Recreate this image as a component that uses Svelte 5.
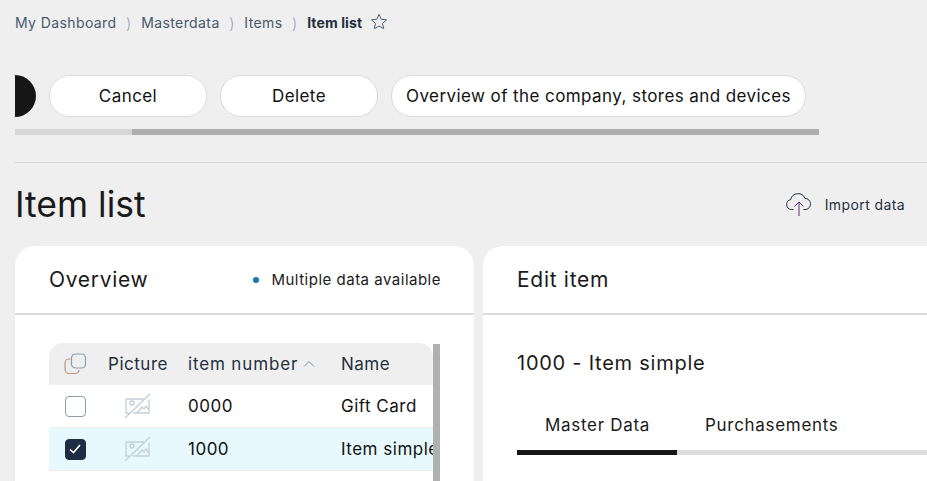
<script>
	const crumbs = ['My Dashboard', 'Masterdata', 'Items'];
	const actions = ['Cancel', 'Delete', 'Overview of the company, stores and devices'];
	const rows = [
		{ number: '0000', name: 'Gift Card', checked: false },
		{ number: '1000', name: 'Item simple', checked: true }
	];
</script>

<div class="page">
	<nav class="crumbs">
		{#each crumbs as crumb}
			<span class="crumb">{crumb}</span>
			<span class="sep">)</span>
		{/each}
		<span class="crumb crumb--current">Item list</span>
		<svg class="star" width="18" height="18" viewBox="0 0 18 18" fill="none" stroke="#4a6178" stroke-width="1">
			<path d="M9 1.300l2.200 5 5.400.5-4.100 3.600 1.200 5.300L9 13l-4.700 2.700 1.200-5.300L1.400 6.800l5.400-.5z" />
		</svg>
	</nav>

	<div class="actions-scroll">
		<div class="actions">
			<div class="dark-pill"></div>
			{#each actions as action, i}
				<button class="action" class:action--wide={i == 2}>{action}</button>
			{/each}
		</div>
		<div class="scrollbar"><div class="scrollbar__thumb"></div></div>
	</div>

	<div class="title-row">
		<h1>Item list</h1>
		<div class="import">
			<svg width="28" height="26" viewBox="0 0 28 26" fill="none" stroke="#24303f" stroke-width="1">
				<path d="M8.500 18.500H6.500a5 5 0 0 1-.8-9.900 7.500 7.500 0 0 1 14.300-1.200 5.600 5.600 0 0 1 1 11.100h-2.500" />
				<path d="M14 25V11.500M9.500 15.500l4.500-4.500 4.500 4.500" stroke="#5a2a8c" />
			</svg>
			<span>Import data</span>
		</div>
	</div>

	<div class="cards">
		<section class="card card--overview">
			<header class="card__head">
				<h2>Overview</h2>
				<div class="legend"><i></i>Multiple data available</div>
			</header>
			<div class="card__body">
				<div class="table-wrap">
					<div class="table">
						<div class="row row--head">
							<div class="cell cell--check">
								<svg width="24" height="24" viewBox="0 0 24 24" fill="none" stroke-width="1.200">
									<rect x="8.500" y="2" width="14" height="14" rx="4" stroke="#8c9bb0" />
									<path d="M7.500 7H6a4 4 0 0 0-4 4v6.500a4 4 0 0 0 4 4h6a4 4 0 0 0 4-3.500" stroke="#c98f7c" />
								</svg>
							</div>
							<div class="cell cell--pic">Picture</div>
							<div class="cell cell--num cell--sort">item number
								<svg width="12" height="8" viewBox="0 0 12 8" fill="none" stroke="#7d8b99"><path d="M1 6.500l5-5 5 5" /></svg>
							</div>
							<div class="cell cell--name">Name</div>
						</div>
						{#each rows as row}
							<div class="row" class:row--active={row.checked}>
								<div class="cell cell--check">
									<span class="box" class:box--on={row.checked}>
										{#if row.checked}
											<svg width="14" height="12" viewBox="0 0 14 12" fill="none" stroke="#fff" stroke-width="1.600"><path d="M2 6.500l3.500 3L12 2" /></svg>
										{/if}
									</span>
								</div>
								<div class="cell cell--pic">
									<svg class="nopic" width="28" height="26" viewBox="0 0 28 26" fill="none" stroke="#c3ced6" stroke-width="1.300">
										<path d="M2 6h18M25 6.500V20H9M2 6v14h3" />
										<circle cx="8" cy="10" r="2" />
										<path d="M13 20l5-6 2 2 2-3 3 4" />
										<path d="M1 25L26 1" />
									</svg>
								</div>
								<div class="cell cell--num">{row.number}</div>
								<div class="cell cell--name">{row.name}</div>
							</div>
						{/each}
					</div>
					<div class="table-bar"></div>
				</div>
			</div>
		</section>

		<section class="card card--edit">
			<header class="card__head">
				<h2>Edit item</h2>
			</header>
			<div class="edit__body">
				<h3>1000 - Item simple</h3>
				<div class="tabs">
					<div class="tab tab--active">Master Data</div>
					<div class="tab">Purchasements</div>
				</div>
			</div>
		</section>
	</div>
</div>

<style>
	:global(body) {
		margin: 0;
		background: #efefef;
	}

	.page {
		width: 927px;
		height: 481px;
		overflow: hidden;
		box-sizing: border-box;
		padding: 11px 0 0 15px;
		font-family: Inter, "Open Sans", sans-serif;
		color: #111;
	}

	.crumbs {
		display: flex;
		align-items: center;
		height: 22px;
		font-size: 14px;
		letter-spacing: 0.4px;
		color: #46596e;
	}

	.sep {
		margin: 3px 9.500px 0 9.500px;
		font-size: 15px;
		font-weight: 300;
		color: #9aa5b1;
	}

	.crumb--current {
		font-weight: 700;
		letter-spacing: 0.1px;
		color: #24303f;
	}

	.star {
		margin-left: 8px;
	}

	.actions-scroll {
		width: 804px;
		margin-top: 42px;
		overflow: hidden;
	}

	.actions {
		display: flex;
		gap: 13px;
		height: 42px;
	}

	.dark-pill {
		width: 21px;
		height: 42px;
		border-radius: 0 21px 21px 0;
		background: #161616;
	}

	.action {
		width: 158px;
		height: 42px;
		padding: 0;
		background: #fff;
		border: 1px solid #dcdcdc;
		border-radius: 21px;
		font: inherit;
		font-size: 17px;
		letter-spacing: 0.42px;
		color: #111;
	}

	.action--wide {
		width: 415px;
	}

	.scrollbar {
		height: 6px;
		margin-top: 12px;
		background: #d6d6d6;
	}

	.scrollbar__thumb {
		height: 6px;
		margin-left: 117px;
		background: #aeaeae;
	}

	.title-row {
		display: flex;
		justify-content: space-between;
		align-items: center;
		height: 83px;
		margin-top: 27px;
		border-top: 1px solid #d8d8d8;
		box-sizing: border-box;
	}

	h1 {
		margin: 0;
		font-size: 35.500px;
		font-weight: 400;
		color: #1a1a1a;
	}

	.import {
		display: flex;
		align-items: center;
		gap: 12px;
		padding-right: 22px;
		font-size: 14px;
		letter-spacing: 0.4px;
		color: #24303f;
	}

	.cards {
		display: flex;
		gap: 9px;
		margin-top: 1px;
	}

	.card {
		background: #fff;
		border-radius: 20px 20px 0 0;
		height: 240px;
	}

	.card--overview {
		width: 459px;
		flex-shrink: 0;
	}

	.card--edit {
		flex: 1;
		min-width: 0;
		border-radius: 20px 0 0 0;
	}

	.card__head {
		display: flex;
		justify-content: space-between;
		align-items: center;
		height: 67px;
		padding: 0 33px 0 34px;
		border-bottom: 2px solid #dcdcdc;
	}

	h2 {
		margin: 0;
		font-size: 21px;
		font-weight: 400;
		letter-spacing: 0.7px;
		color: #1a1a1a;
	}

	.legend {
		display: flex;
		align-items: center;
		font-size: 15px;
		letter-spacing: 0.5px;
		color: #1a1a1a;
	}

	.legend i {
		width: 6px;
		height: 6px;
		margin-right: 12px;
		border-radius: 50%;
		background: #0c7fa8;
	}

	.card__body {
		padding: 28px 0 0 34px;
	}

	.table-wrap {
		display: flex;
		width: 391px;
	}

	.table {
		width: 384px;
		overflow: hidden;
		border-radius: 14px 14px 0 0;
	}

	.table-bar {
		width: 7px;
		height: 140px;
		margin-top: 1px;
		background: #b0b0b0;
	}

	.row {
		display: flex;
		align-items: center;
		height: 43px;
		box-sizing: border-box;
		border-bottom: 1px solid #eeeeee;
		font-size: 17px;
		letter-spacing: 0.5px;
		color: #111;
		white-space: nowrap;
	}

	.row--head {
		height: 42px;
		border-bottom: 0;
		background: #efefef;
		color: #24303f;
	}

	.row--active {
		background: #e7f9fe;
	}

	.cell {
		display: flex;
		align-items: center;
	}

	.cell--check {
		justify-content: center;
		width: 52px;
		flex-shrink: 0;
	}

	.cell--pic {
		justify-content: center;
		width: 86px;
		margin-left: -6px;
		flex-shrink: 0;
	}

	.cell--num {
		gap: 5px;
		width: 160px;
		flex-shrink: 0;
		box-sizing: border-box;
		padding-left: 7px;
	}

	.cell--sort {
		letter-spacing: 0.85px;
	}

	.cell--name {
		flex: 1;
		min-width: 0;
	}

	.box {
		display: flex;
		justify-content: center;
		align-items: center;
		width: 19px;
		height: 19px;
		background: #fff;
		border: 1px solid #8c9bb0;
		border-radius: 4px;
	}

	.box--on {
		background: #1f2d42;
		border-color: #1f2d42;
	}

	.edit__body {
		padding: 0 0 0 34px;
	}

	h3 {
		margin: 0;
		padding-top: 35px;
		font-size: 20px;
		font-weight: 400;
		letter-spacing: 0.75px;
		line-height: 26px;
		color: #1a1a1a;
	}

	.tabs {
		display: flex;
		height: 60px;
		margin-top: 19px;
		box-sizing: border-box;
		border-bottom: 5px solid #dcdcdc;
	}

	.tab {
		height: 60px;
		box-sizing: border-box;
		padding: 18px 28px 0;
		border-bottom: 5px solid transparent;
		font-size: 17px;
		letter-spacing: 0.7px;
		line-height: 24px;
		white-space: nowrap;
		color: #1a1a1a;
	}

	.tab--active {
		width: 160px;
		border-bottom-color: #161616;
	}
</style>
